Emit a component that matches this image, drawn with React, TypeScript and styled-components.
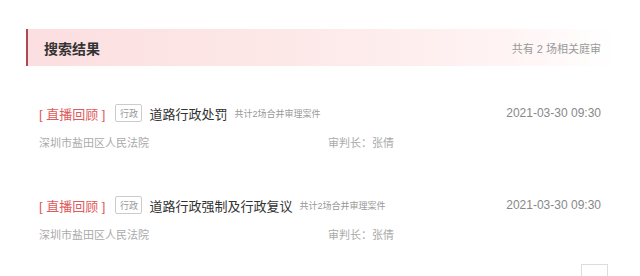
import React from "react";
import styled, { createGlobalStyle } from "styled-components";

const Global = createGlobalStyle`
  html, body { margin: 0; padding: 0; background: #fff; }
  body { font-family: "Liberation Sans", "Noto Sans CJK SC", sans-serif; overflow: hidden; }
`;

const Page = styled.div`
  width: 640px;
  height: 276px;
  padding: 29px 24px 0 26px;
  box-sizing: border-box;
  position: relative;
`;

const Header = styled.div`
  height: 37px;
  display: flex;
  align-items: center;
  justify-content: space-between;
  border-left: 2px solid #a94a55;
  background: linear-gradient(90deg, #fcdfe0 0%, #fde8e8 45%, #fff3f3 80%, #ffffff 100%);
  padding: 0 15px 0 16px;
`;

const Title = styled.div`
  font-size: 14px;
  font-weight: bold;
  color: #333;
`;

const Count = styled.div`
  font-size: 11px;
  color: #999;
`;

const List = styled.div`
  display: flex;
  flex-direction: column;
  padding: 37px 15px 0 13px;
`;

const Row = styled.div`
  height: 92px;
  display: flex;
  flex-direction: column;
  gap: 11px;
`;

const Line = styled.div`
  display: flex;
  align-items: center;
  height: 20px;
`;

const MetaLine = styled.div`
  display: flex;
  align-items: center;
  height: 16px;
  font-size: 11px;
  color: #aaa;
`;

const Live = styled.span`
  font-size: 13px;
  color: #e05a5c;
  white-space: pre;
`;

const Tag = styled.span`
  margin-left: 10px;
  width: 25px;
  height: 16px;
  border: 1px solid #ccc;
  border-radius: 2px;
  font-size: 9px;
  color: #999;
  display: flex;
  align-items: center;
  justify-content: center;
`;

const CaseName = styled.span`
  margin-left: 7px;
  font-size: 13px;
  color: #333;
`;

const Note = styled.span`
  margin-left: 7px;
  font-size: 9px;
  color: #999;
`;

const Time = styled.span`
  margin-left: auto;
  font-size: 12px;
  color: #888;
`;

const Court = styled.span`
  width: 289px;
`;

const PageBox = styled.div`
  position: absolute;
  left: 581px;
  top: 264px;
  width: 27px;
  height: 24px;
  border: 1px solid #ddd;
  box-sizing: border-box;
`;

const rows = [
  { name: "道路行政处罚", time: "2021-03-30 09:30" },
  { name: "道路行政强制及行政复议", time: "2021-03-30 09:30" },
];

export default function App() {
  return (
    <>
      <Global />
      <Page>
        <Header>
          <Title>搜索结果</Title>
          <Count>共有 2 场相关庭审</Count>
        </Header>
        <List>
          {rows.map((r, i) => (
            <Row key={i}>
              <Line>
                <Live>[ 直播回顾 ]</Live>
                <Tag>行政</Tag>
                <CaseName>{r.name}</CaseName>
                <Note>共计2场合并审理案件</Note>
                <Time>{r.time}</Time>
              </Line>
              <MetaLine>
                <Court>深圳市盐田区人民法院</Court>
                <span>审判长：张倩</span>
              </MetaLine>
            </Row>
          ))}
        </List>
        <PageBox />
      </Page>
    </>
  );
}
